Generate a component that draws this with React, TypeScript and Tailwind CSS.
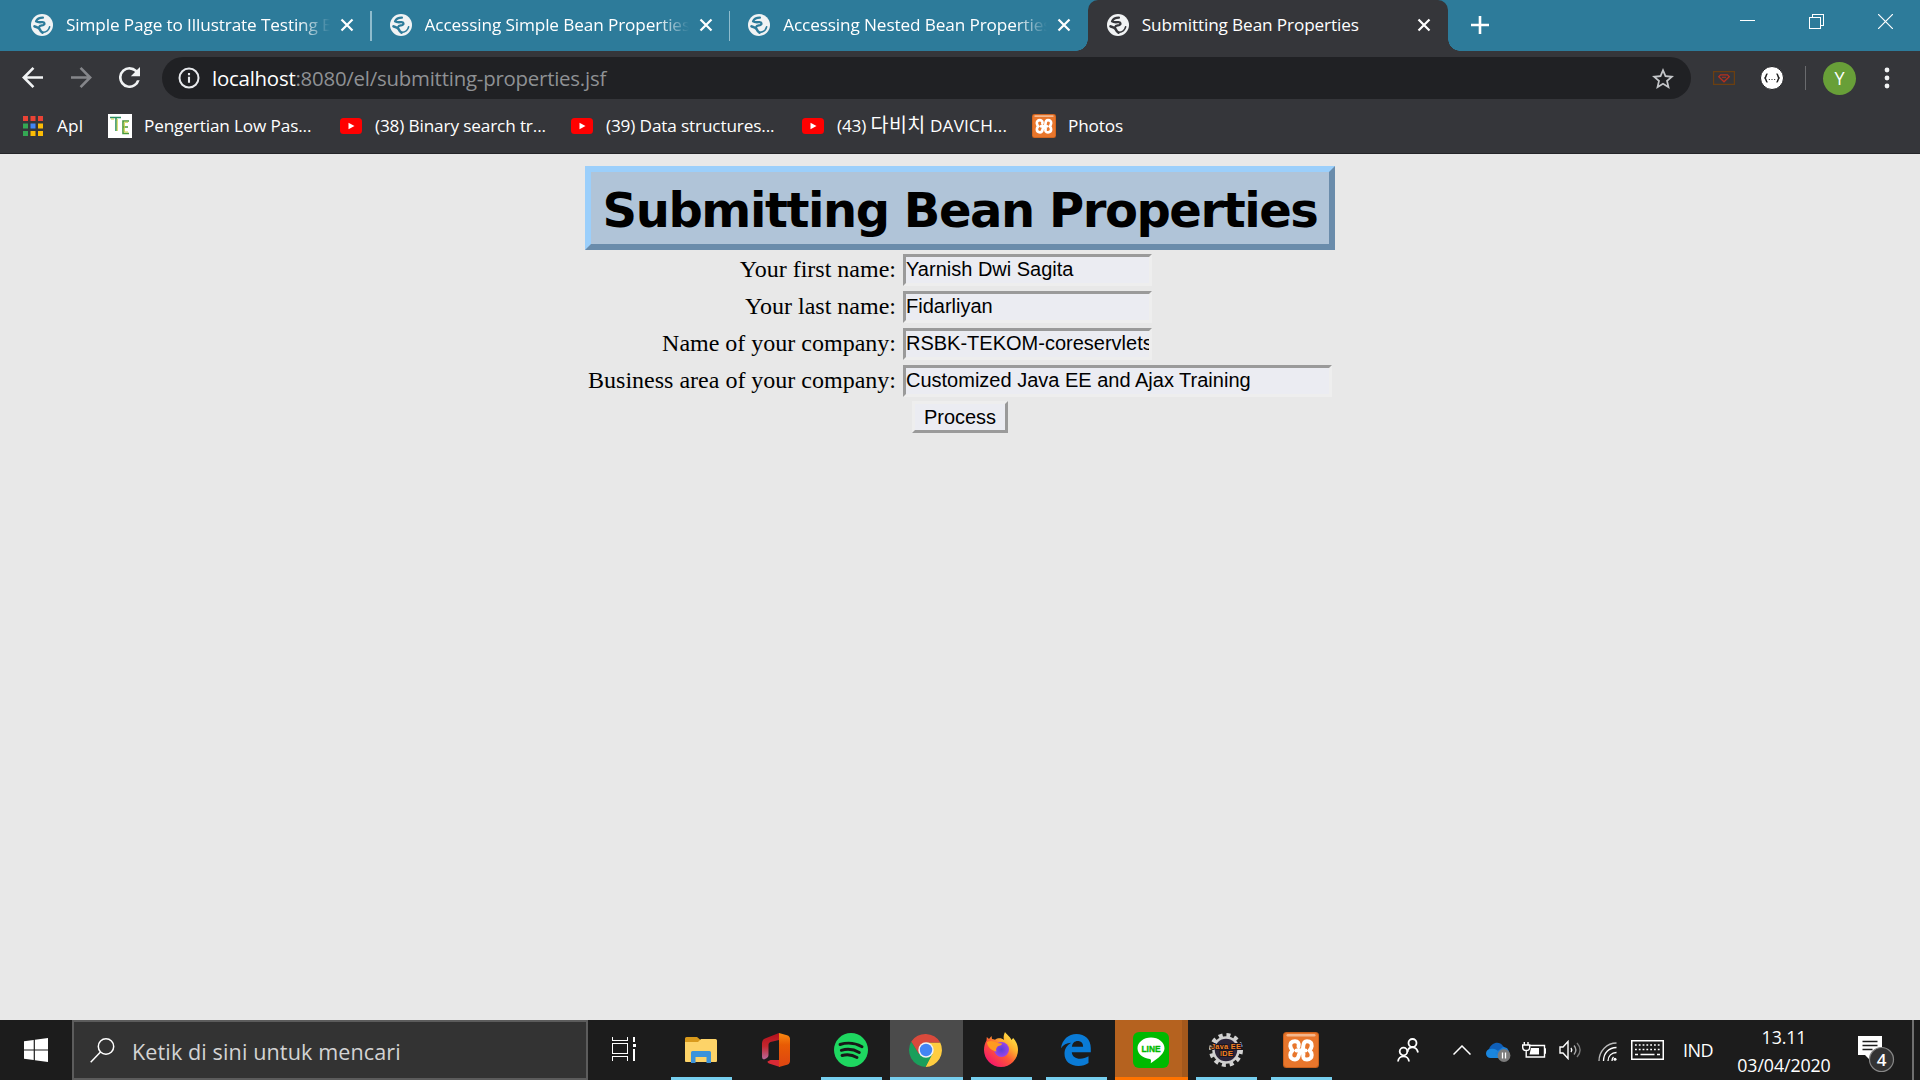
import React from "react";

const UI = "font-['Open_Sans',sans-serif]";

function Globe() {
  return (
    <svg viewBox="0 0 24 24" className="size-[22px] shrink-0">
      <circle cx="12" cy="12" r="12" fill="#f1f3f4" />
      <g fill="none" stroke="currentColor" strokeLinecap="round" strokeLinejoin="round">
        <path d="M13 4C9 4 6.500 5.500 5.500 8c2 1.500 4.500 1 7 .8 2.500 0 3 2.200 1 3.200-1.500.6-4 .4-4.500 2" strokeWidth="2.500" />
        <path d="M3.800 13.500c1 .5 4 .8 5.500 2.800.8 1.700 1.700 3.200 3.200 4" strokeWidth="2.800" />
        <path d="M13 20c3.500-.3 6.500-2.500 7.300-6" strokeWidth="1.800" />
      </g>
    </svg>
  );
}

function Cross() {
  return (
    <svg viewBox="0 0 14 14" className="size-[14px] shrink-0">
      <path d="M1.500 1.500l11 11M12.500 1.500l-11 11" stroke="#fff" strokeWidth="2.200" />
    </svg>
  );
}

function Tab({ title, active, sep }: { title: string; active?: boolean; sep?: boolean }) {
  return (
    <div
      className={
        active
          ? "relative flex h-[51px] w-[360px] items-center rounded-t-[10px] bg-[#35363a] pl-[19px] text-[#35363a]"
          : "relative flex h-[51px] w-[358.6px] items-center pl-[19px] text-[#2d7b9a]"
      }
    >
      <span className="mt-[-1px] flex"><Globe /></span>
      <div
        className={
          active
            ? "ml-[13px] mt-[-2px] w-[265px] overflow-hidden whitespace-nowrap text-[17.2px] leading-[26px] tracking-[-0.12px] text-white"
            : "ml-[13px] mt-[-2px] w-[264px] overflow-hidden whitespace-nowrap text-[17.2px] leading-[26px] tracking-[-0.12px] text-white [mask-image:linear-gradient(to_right,black_88%,transparent_100%)]"
        }
      >
        {title}
      </div>
      <span className="ml-[10px] mt-[-1px] flex"><Cross /></span>
      {sep && <div className="absolute right-[-1px] top-[11px] h-[30px] w-[1.500px] bg-[#8fbccd]" />}
      {active && (
        <>
          <div className="absolute bottom-0 right-full size-[12px] bg-[radial-gradient(circle_at_0_0,transparent_11.5px,#35363a_12px)]" />
          <div className="absolute bottom-0 left-full size-[12px] bg-[radial-gradient(circle_at_100%_0,transparent_11.5px,#35363a_12px)]" />
        </>
      )}
    </div>
  );
}

function TabStrip() {
  return (
    <div className="flex h-[51px] bg-[#2d7b9a] pl-[12px]">
      <Tab title="Simple Page to Illustrate Testing Expressions" sep />
      <Tab title="Accessing Simple Bean Properties" sep />
      <Tab title="Accessing Nested Bean Properties" />
      <Tab title="Submitting Bean Properties" active />
      <svg viewBox="0 0 18 18" className="ml-[23px] mt-[16px] size-[18px]">
        <path d="M9 0v18M0 9h18" stroke="#fff" strokeWidth="2.600" />
      </svg>
      <div className="ml-auto mr-[27px] mt-[14px] flex gap-[54px]">
        <svg viewBox="0 0 15 15" className="size-[15px]"><path d="M0 6.500h15" stroke="#fff" /></svg>
        <svg viewBox="0 0 15 15" className="size-[15px]" fill="none" stroke="#fff" shapeRendering="crispEdges">
          <path d="M.5 3.500h11v11H.5zM3.500 3.500v-3h11v11h-3" />
        </svg>
        <svg viewBox="0 0 15 15" className="size-[15px]"><path d="M0 0l15 15M15 0L0 15" stroke="#fff" strokeWidth="1.200" /></svg>
      </div>
    </div>
  );
}

function Toolbar() {
  return (
    <div className="flex h-[54px] items-center pl-[22px]">
      <svg viewBox="4 4 16 16" className="mt-[-1px] size-[21px]" fill="#f1f3f4"><path d="M20 11H7.830l5.590-5.590L12 4l-8 8 8 8 1.410-1.410L7.830 13H20v-2z" /></svg>
      <svg viewBox="4 4 16 16" className="ml-[28px] mt-[-1px] size-[21px]" fill="#85868a"><path d="M12 4l-1.410 1.410L16.170 11H4v2h12.170l-5.580 5.590L12 20l8-8z" /></svg>
      <svg viewBox="4 4 16 16" className="ml-[27px] mt-[-1px] size-[21px]" fill="#f1f3f4"><path d="M17.650 6.350A7.960 7.960 0 0 0 12 4a8 8 0 1 0 7.730 10h-2.080A6 6 0 1 1 12 6c1.660 0 3.140.69 4.220 1.780L13 11h7V4l-2.350 2.350z" /></svg>
      <div className="ml-[22px] flex h-[42px] w-[1529px] items-center rounded-full bg-[#202124] pl-[16px]">
        <svg viewBox="0 0 22 22" className="size-[22px]">
          <circle cx="11" cy="11" r="9.500" fill="none" stroke="#e8eaed" strokeWidth="2" />
          <path d="M11 9.800v6M11 6v2.200" stroke="#e8eaed" strokeWidth="2.100" />
        </svg>
        <div className="ml-[12px] text-[20.4px] leading-[30px] tracking-[-0.22px] text-[#8f9194]">
          <span className="text-white">localhost</span>:8080/el/submitting-properties.jsf
        </div>
        <svg viewBox="2 2 20 19" className="ml-auto mr-[17px] h-[21px] w-[22px]" fill="#c4c6c9">
          <path d="M22 9.240l-7.190-.62L12 2 9.190 8.630 2 9.240l5.460 4.730L5.820 21 12 17.270 18.180 21l-1.630-7.030L22 9.240zM12 15.400l-3.760 2.270 1-4.280-3.320-2.880 4.380-.38L12 6.100l1.710 4.040 4.380.38-3.320 2.880 1 4.280L12 15.400z" />
        </svg>
      </div>
      <svg viewBox="0 0 22 14" className="ml-[22px] h-[14px] w-[22px]" fill="none">
        <path d="M.6.6h20.800v12.800H.6z" stroke="#6b3f10" strokeWidth="1.200" />
        <path d="M7.500 3.800h7l1.800 2L11 10.800 5.700 5.800z" stroke="#b5301f" strokeWidth="1.300" />
        <path d="M9 6.300h4" stroke="#b5301f" strokeWidth="1" />
      </svg>
      <svg viewBox="0 0 24 24" className="ml-[25px] size-[24px]">
        <circle cx="12" cy="12" r="11.500" fill="#fff" stroke="#202124" />
        <path d="M7.500 8C5.500 8 6.800 11.500 4.500 12c2.300.5 1 4 3 4M16.500 8c2 0 .7 3.500 3 4-2.300.5-1 4-3 4" fill="none" stroke="#222" strokeWidth="1.500" />
        <path d="M8.800 13.500h1.200M11.400 13.500h1.200M14 13.500h1.200" stroke="#444" strokeWidth="1.200" />
      </svg>
      <div className="ml-[21px] h-[24px] w-px bg-[#6a6b6e]" />
      <div className="ml-[17px] flex size-[33px] items-center justify-center rounded-full bg-[#689f38] text-[18px] leading-none text-white">Y</div>
      <svg viewBox="0 0 6 22" className="ml-[28px] h-[22px] w-[6px]" fill="#f1f3f4">
        <circle cx="3" cy="3" r="2.400" /><circle cx="3" cy="11" r="2.400" /><circle cx="3" cy="19" r="2.400" />
      </svg>
    </div>
  );
}

function YouTube() {
  return (
    <svg viewBox="0 0 22 16" className="h-[16px] w-[22px] shrink-0">
      <rect width="22" height="16" rx="3.500" fill="#f00" />
      <path d="M8.500 4.700v6.600L14.500 8z" fill="#fff" />
    </svg>
  );
}

function Xampp({ className }: { className: string }) {
  return (
    <svg viewBox="0 0 36 36" className={className}>
      <rect width="36" height="36" rx="3.500" fill="#c9601c" />
      <rect x="1" y="1" width="34" height="34" rx="3" fill="#e8762c" />
      <rect x="3.500" y="2" width="29" height="2.500" rx="1.200" fill="#f3b78d" />
      <path
        d="M15.500 14.500c1-3-.8-5.300-3.500-5.300-3.500 0-5 2.300-4.700 4.800.2 1.800 1 3.200 2.200 4.500-1.500 1.300-2.200 2.700-2.200 4.500 0 2.500 1.700 4.500 4.700 4.500 3.500 0 3.500-3 4-5l4-6c.5-2-.5-7.300 4-7.300 3.500 0 5 2.300 4.700 4.800-.2 1.800-1 3.200-2.200 4.500 1.500 1.300 2.200 2.700 2.200 4.500 0 2.500-1.700 4.500-4.700 4.500-3.500 0-4.500-2.300-3.500-5.300M13.500 18.500h9"
        fill="none" stroke="#fff" strokeWidth="4" strokeLinejoin="round" strokeLinecap="round"
      />
    </svg>
  );
}

const APP_COLORS = [
  "#ea4335", "#ea4335", "#ea4335",
  "#34a853", "#4285f4", "#fbbc05",
  "#34a853", "#fbbc05", "#fbbc05",
];

function Bookmarks() {
  return (
    <div className="flex h-[49px] items-center border-b border-[#242528] pb-[7px] pl-[23px] text-[17.2px] leading-[26px] tracking-[-0.14px] text-white">
      <svg viewBox="0 0 20 20" className="size-[20px] shrink-0">
        {APP_COLORS.map((c, i) => (
          <rect key={i} x={(i % 3) * 7.500} y={Math.floor(i / 3) * 7.500} width="5" height="5" fill={c} />
        ))}
      </svg>
      <span className="ml-[14px] w-[51px] tracking-[0.2px]">Apl</span>
      <svg viewBox="0 0 24 24" className="size-[24px] shrink-0">
        <path d="M0 0h24v24H0z" fill="#fff" />
        <path d="M2 3.500h11M8 4v13" stroke="#2b8f62" strokeWidth="1.600" fill="none" />
        <path d="M21 7h-6v12.500h6M15 13h5" stroke="#4a9a3c" strokeWidth="1.600" fill="none" />
        <path d="M3 5h3M9.200 5v12M16 8.200h4M16 18h4M16.300 9v9" stroke="#c9cf3a" strokeWidth="1" />
      </svg>
      <span className="ml-[12px] w-[196px] whitespace-nowrap">Pengertian Low Pas...</span>
      <YouTube />
      <span className="ml-[13px] w-[196px] whitespace-nowrap">(38) Binary search tr...</span>
      <YouTube />
      <span className="ml-[13px] w-[196px] whitespace-nowrap">(39) Data structures...</span>
      <YouTube />
      <span className="ml-[13px] w-[195px] whitespace-nowrap">
        (43) <span className="font-['Noto_Sans_CJK_KR',sans-serif] text-[19.500px] leading-[20px] tracking-[0.4px]">다비치</span> <span className="tracking-[0.2px]">DAVICH...</span>
      </span>
      <Xampp className="size-[24px] shrink-0" />
      <span className="ml-[12px]">Photos</span>
    </div>
  );
}

function Field({ label, value, wide }: { label: string; value: string; wide?: boolean }) {
  return (
    <div className="flex h-[37px] items-start">
      <div className="w-[311px] whitespace-nowrap text-right font-['Liberation_Serif',serif] text-[24px] leading-[31px] text-black">{label}</div>
      <div
        className={
          wide
            ? "ml-[7px] h-[32px] w-[429px] overflow-hidden whitespace-nowrap border-[3px] border-b-[#eeeeee] border-l-[#9a9a9a] border-r-[#eeeeee] border-t-[#9a9a9a] bg-[#ebecf2] font-['Liberation_Sans',sans-serif] text-[20px] leading-[25px] text-black"
            : "ml-[7px] h-[32px] w-[249px] overflow-hidden whitespace-nowrap border-[3px] border-b-[#eeeeee] border-l-[#9a9a9a] border-r-[#eeeeee] border-t-[#9a9a9a] bg-[#ebecf2] font-['Liberation_Sans',sans-serif] text-[20px] leading-[25px] text-black"
        }
      >
        {value}
      </div>
    </div>
  );
}

function Page() {
  return (
    <main className="flex flex-1 flex-col items-center bg-[#e8e8e8] pt-[12px]">
      <h1 className="flex h-[84px] w-[750px] items-center justify-center whitespace-nowrap border-[6px] border-b-[#6a8cab] border-l-[#9bcffb] border-r-[#6a8cab] border-t-[#9bcffb] bg-[#b0c4d8] pt-[3px] font-['Verdana','DejaVu_Sans',sans-serif] text-[48px] font-bold leading-[58px] tracking-[-1.45px] text-black">
        Submitting Bean Properties
      </h1>
      <div className="mt-[4px] w-[750px]">
        <Field label="Your first name:" value="Yarnish Dwi Sagita" />
        <Field label="Your last name:" value="Fidarliyan" />
        <Field label="Name of your company:" value="RSBK-TEKOM-coreservlets.com" />
        <Field label="Business area of your company:" value="Customized Java EE and Ajax Training" wide />
      </div>
      <button className="-mt-px h-[32px] w-[96px] border-[3px] border-b-[#9a9a9a] border-l-[#eeeeee] border-r-[#9a9a9a] border-t-[#eeeeee] bg-[#ebecf2] font-['Liberation_Sans',sans-serif] text-[20px] leading-[26px] text-black">
        Process
      </button>
    </main>
  );
}

function TaskItem({ children, running, state }: { children: React.ReactNode; running?: boolean; state?: "active" | "alert" }) {
  return (
    <div className="flex h-[60px] w-[75px] shrink-0 justify-center">
      <div
        className={
          state === "active"
            ? "flex w-[73px] flex-col items-center bg-[#4b4b4b]"
            : state === "alert"
              ? "flex w-[73px] flex-col items-center border-r-[6px] border-[#a3581c] bg-[#b5621f]"
              : "flex w-[73px] flex-col items-center"
        }
      >
        <div className={state === "alert" ? "ml-[5px] flex h-[57px] items-center pt-[3px]" : "mr-[2px] flex h-[57px] items-center pt-[2px]"}>{children}</div>
        {state === "active" && <div className="h-[3px] w-[73px] bg-[#76ceee]" />}
        {state === "alert" && <div className="ml-[6px] h-[3px] w-[73px] bg-[#ff7300]" />}
        {!state && running && <div className="h-[3px] w-[61px] bg-[#76ceee]" />}
      </div>
    </div>
  );
}

function FolderIcon() {
  return (
    <svg viewBox="0 0 32 28" className="h-[28px] w-[32px]">
      <path d="M0 2.500Q0 1 1.500 1H12l3 2.500V8H0z" fill="#d99a1c" />
      <path d="M0 6h13l3-3h14.500Q32 3 32 4.500V25q0 1-1 1H1q-1 0-1-1z" fill="#fdd368" />
      <path d="M6 27V16.500Q6 15 7.500 15h17q1.500 0 1.500 1.500V27h-4.500v-6h-11v6z" fill="#3b93dc" />
    </svg>
  );
}

function OfficeIcon() {
  return (
    <svg viewBox="0 0 28 34" className="h-[34px] w-[28px]">
      <defs>
        <linearGradient id="offL" x1="0" y1="0" x2="0" y2="1"><stop offset="0" stopColor="#b3101c" /><stop offset=".5" stopColor="#c4262e" /><stop offset="1" stopColor="#b86a9c" /></linearGradient>
        <linearGradient id="offR" x1="0" y1="0" x2="0" y2="1"><stop offset="0" stopColor="#f98a12" /><stop offset=".35" stopColor="#e85b04" /><stop offset="1" stopColor="#dd4412" /></linearGradient>
      </defs>
      <path d="M17 0L3 5.500Q0 6.800 0 10v14q0 2 2 2.500l2.500-1.200q2-1 2-3V11.500Q6.500 9.500 8.500 9L17 7z" fill="url(#offL)" />
      <path d="M5.500 28.500l3-1.500H18v7L7 30.500q-1.500-.5-1.500-2z" fill="#d92a35" />
      <path d="M17 0l8 2.300Q28 3.200 28 6v22q0 2.800-3 3.700L17 34z" fill="url(#offR)" />
    </svg>
  );
}

function SpotifyIcon() {
  return (
    <svg viewBox="0 0 34 34" className="size-[34px]">
      <circle cx="17" cy="17" r="17" fill="#1ed760" />
      <path d="M6 11.500c7-2.200 15.500-1.400 22 2.200M7.300 17.300c6-1.700 12.700-1 18 2.200M8 22.500c5-1.300 10.500-.7 15 2" fill="none" stroke="#181818" strokeWidth="2.900" strokeLinecap="round" />
    </svg>
  );
}

function ChromeIcon() {
  return (
    <svg viewBox="0 0 34 34" className="size-[34px]">
      <path d="M17 9.500h14.200A17 17 0 0 1 16.500 34L23 20.500z" fill="#ffcd40" />
      <path d="M2.280 8.500A17 17 0 0 0 16.500 34L23.500 21 10 21z" fill="#1a9f5b" />
      <path d="M17 9.500H31.200A17 17 0 0 0 2.280 8.500L10 21z" fill="#d94a3c" />
      <circle cx="17" cy="17" r="7.700" fill="#f1f1f1" />
      <circle cx="17" cy="17" r="6.200" fill="#4285f4" />
    </svg>
  );
}

function FirefoxIcon() {
  return (
    <svg viewBox="0 0 34 35" className="h-[35px] w-[34px]">
      <defs>
        <linearGradient id="ff" x1=".9" y1="0" x2=".15" y2=".9"><stop offset="0" stopColor="#fff44f" /><stop offset=".35" stopColor="#ffb02e" /><stop offset=".6" stopColor="#ff5a34" /><stop offset="1" stopColor="#f5156c" /></linearGradient>
        <radialGradient id="ffp"><stop offset="0" stopColor="#5b3fd8" /><stop offset="1" stopColor="#9a45e8" /></radialGradient>
      </defs>
      <path d="M21 0c1 2 4.500 4 6.500 8l1.700-2C32 9 34 13 34 18a17 17 0 0 1-34 0c0-4 1-7 2.500-9.500l.3-3.500L5 7l2.500-3 .5 3c1 0 2 .2 3 .8C14 5.500 18 6 20 8c-1-3 0-6 1-8z" fill="url(#ff)" />
      <circle cx="17.500" cy="17.500" r="7.500" fill="url(#ffp)" />
      <path d="M3 10c3-2 8-1 10 1l5 .5c0 2-3.500 2.500-4.500 3-1.200 1.500-2 3-1 5C8 19 3 15 3 10z" fill="#ff9a20" />
    </svg>
  );
}

function EdgeIcon() {
  return (
    <svg viewBox="0 0 30 32" className="h-[32px] w-[30px]">
      <path d="M0 14.200C1.200 5.500 7.500 0 15.500 0 24 0 29.800 5.500 29.800 14v4.200H10.800c.3 4.300 3.800 6.500 8.400 6.500 3 0 5.800-.8 8.300-2.400v6.800C24.600 31 21.500 32 17.500 32 9.200 32 3.500 27.300 3.500 19.800c0-4.800 2.500-8.800 6.800-11C5.500 9 2.200 10.800 0 14.200zM10.900 12.800h11.200c0-3.600-2-5.700-5.400-5.700-3.100 0-5.300 2.100-5.800 5.700z" fill="#0a7bd6" />
    </svg>
  );
}

function LineIcon() {
  return (
    <svg viewBox="0 0 36 36" className="size-[36px]">
      <rect width="36" height="36" rx="6" fill="#00b900" />
      <path d="M18 5.500c7.500 0 13.500 4.800 13.500 10.800 0 4.800-5.500 9.700-13.800 14.900.4-2.200.6-4-.8-4.200C10 26.300 4.500 22 4.500 16.300 4.500 10.300 10.500 5.500 18 5.500z" fill="#fff" />
      <text x="18" y="20" textAnchor="middle" fontFamily="Liberation Sans" fontWeight="700" fontSize="9" textLength="19" lengthAdjust="spacingAndGlyphs" fill="#00b900" stroke="#00b900" strokeWidth=".4">LINE</text>
    </svg>
  );
}

function JavaIcon() {
  return (
    <svg viewBox="0 0 34 34" className="size-[34px] overflow-visible">
      <circle cx="17" cy="17" r="15" fill="none" stroke="#d2d2d2" strokeWidth="4" strokeDasharray="4 3.854" />
      <circle cx="17" cy="17" r="12.500" fill="#2b2438" stroke="#cfcfcf" strokeWidth="2.500" />
      <g fontFamily="Liberation Sans" fontWeight="700" fill="#f58220" stroke="#1a1420" strokeWidth="2" paintOrder="stroke" textAnchor="middle">
        <text x="17" y="15.500" fontSize="7.500" textLength="30">Java EE</text>
        <text x="17.500" y="23" fontSize="8" textLength="13">IDE</text>
      </g>
    </svg>
  );
}

function Tray() {
  return (
    <div className="ml-auto flex h-[60px] items-center text-white">
      <svg viewBox="0 0 22 24" className="h-[24px] w-[22px]" fill="none" stroke="#fff" strokeWidth="1.800">
        <circle cx="15.500" cy="5" r="4" /><path d="M10.500 14c.5-6 9-6.500 10.500.5" />
        <circle cx="6.500" cy="13.500" r="3.800" /><path d="M1 23.500c.5-7 10.500-7 11 0" />
      </svg>
      <svg viewBox="0 0 18 10" className="ml-[34px] h-[10px] w-[18px]" fill="none" stroke="#fff" strokeWidth="1.500"><path d="M.5 9.500L9 1l8.500 8.500" /></svg>
      <svg viewBox="0 0 25 20" className="ml-[15px] mt-[4px] h-[20px] w-[25px]">
        <path d="M3 7C5 1 13-2 17 4l3 3-7 5-12-1z" fill="#0f5fb8" />
        <path d="M4.500 16a4.500 4.500 0 0 1 0-9C8 6 11 7.500 13 10l5 6z" fill="#1a86de" />
        <path d="M14 16l-5-5 8-6c5 0 6 4 6 6z" fill="#1e7fd6" />
        <circle cx="18" cy="13.500" r="6.400" fill="#7c7c7c" />
        <path d="M16.500 10.500v6M19.500 10.500v6" stroke="#fff" strokeWidth="1.300" />
      </svg>
      <svg viewBox="0 0 24 18" className="mb-[1px] ml-[11px] h-[18px] w-[24px]" fill="none" stroke="#fff" strokeWidth="1.400">
        <path d="M8 4.500h14.500V16H6M22.500 8h1v4h-1" /><path d="M9 7h8v6.500H7.500z" fill="#fff" stroke="none" />
        <path d="M.7 4h7v2.500c0 2-1.500 3-3.500 3S.7 8.500.7 6.500zM2.300 1v3M6 1v3M4.200 9.500V16H6" />
      </svg>
      <svg viewBox="0 0 23 20" className="ml-[13px] h-[20px] w-[23px]" fill="none" stroke="#fff" strokeWidth="1.400">
        <path d="M1 7h3l5-5.500v17L4 13H1z" /><path d="M12 8c1 1.300 1 2.700 0 4" />
        <path d="M15 5.500c2.500 3 2.500 6 0 9" stroke="#aaa" /><path d="M18 3c4 4.500 4 9.500 0 14" stroke="#777" />
      </svg>
      <svg viewBox="0 0 19 19" className="ml-[16px] mt-[2px] size-[19px]" fill="none" stroke="#fff" strokeWidth="1.300">
        <path d="M1 19C1 9 9 1 18.500 1" stroke="#bbb" /><path d="M5.500 19C5.500 11 11 5.500 18.500 5.500" /><path d="M10 19c0-5 3.500-8.500 8.500-8.500" /><path d="M14 19c0-2 .5-3 1.500-4" />
        <circle cx="17" cy="17.200" r="1.500" fill="#fff" stroke="none" />
      </svg>
      <svg viewBox="0 0 33 20" className="mb-[1px] ml-[14px] h-[20px] w-[33px]" fill="none" stroke="#fff" strokeWidth="1.500">
        <path d="M.75.75h31.500v18.500H.75z" /><path d="M4 5h25M4 9.500h25" strokeDasharray="1.800 2" /><path d="M4 14.500h3M9.500 14.500h14M26 14.500h3" />
      </svg>
      <span className="ml-[19px] mt-[1px] w-[31px] text-[18px] tracking-[-0.500px]">IND</span>
      <div className="ml-[16px] mt-[2px] w-[108px] text-center text-[17.800px] leading-[28px] tracking-[-0.1px]">
        <div>13.11</div>
        <div>03/04/2020</div>
      </div>
      <svg viewBox="0 0 38 38" className="ml-[20px] mt-[8px] size-[38px]">
        <path d="M0 1h24v19H12v5l-5-5H0z" fill="#fff" />
        <path d="M4.500 6.500h15M4.500 10.500h15M4.500 14.500h10" stroke="#1c1c1c" strokeWidth="1.300" />
        <circle cx="23.500" cy="24.500" r="12" fill="#333" stroke="#888" strokeWidth="1.200" />
        <text x="23.500" y="30.500" textAnchor="middle" fontFamily="Open Sans" fontWeight="600" fontSize="17" fill="#fff">4</text>
      </svg>
      <div className="ml-[16px] mr-[6px] h-[60px] w-[2px] bg-[#6f6f6f]" />
    </div>
  );
}

function Taskbar() {
  return (
    <div className="flex h-[60px] items-center bg-[#1c1c1c]">
      <svg viewBox="0 0 24 24" className="ml-[24px] size-[24px]" fill="#fff">
        <path d="M0 3.300L9.700 2v9.500H0zM10.900 1.800L24 0v11.500H10.900zM0 12.600h9.700V22L0 20.700zM10.900 12.600H24V24l-13.100-1.800z" />
      </svg>
      <div className="ml-[24px] flex h-[60px] w-[516px] items-center border-2 border-[#5c5c5c] bg-[#333333] pl-[16px]">
        <svg viewBox="0 0 25 25" className="size-[25px]" fill="none" stroke="#fff" strokeWidth="1.500">
          <circle cx="16" cy="8.500" r="7.700" /><path d="M10.500 14L.7 24.200" />
        </svg>
        <span className="ml-[17px] mt-[3px] whitespace-nowrap text-[21.600px] leading-[32px] tracking-[0.1px] text-[#d4d4d4]">Ketik di sini untuk mencari</span>
      </div>
      <svg viewBox="0 0 25 24" className="ml-[24px] mt-[-2px] size-[24px]" fill="none" stroke="#fff" strokeWidth="1.300" shapeRendering="crispEdges">
        <path d="M.7 0v3.500h15.500V0M.7 6.500h15.500v10.500H.7zM.7 24v-4h15.500v4M23 0v5M23 11.500V24" /><path d="M21.500 7h3v3h-3z" fill="#fff" stroke="none" />
      </svg>
      <div className="ml-[28px] flex">
        <TaskItem running><FolderIcon /></TaskItem>
        <TaskItem><OfficeIcon /></TaskItem>
        <TaskItem running><SpotifyIcon /></TaskItem>
        <TaskItem running state="active"><ChromeIcon /></TaskItem>
        <TaskItem running><FirefoxIcon /></TaskItem>
        <TaskItem running><EdgeIcon /></TaskItem>
        <TaskItem running state="alert"><LineIcon /></TaskItem>
        <TaskItem running><JavaIcon /></TaskItem>
        <TaskItem running><Xampp className="size-[36px]" /></TaskItem>
      </div>
      <Tray />
    </div>
  );
}

export default function App() {
  return (
    <div className={`flex h-[1080px] w-[1920px] flex-col overflow-hidden ${UI}`}>
      <TabStrip />
      <div className="h-[103px] bg-[#35363a]">
        <Toolbar />
        <Bookmarks />
      </div>
      <Page />
      <Taskbar />
    </div>
  );
}
